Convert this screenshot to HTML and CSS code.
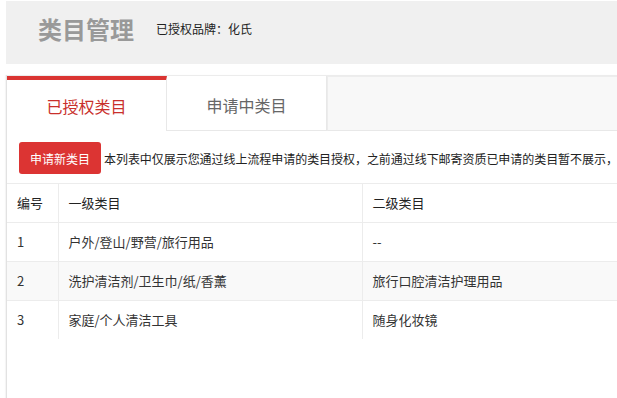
FILE: index.html
```html
<!DOCTYPE html>
<html lang="zh">
<head>
<meta charset="utf-8">
<link rel="stylesheet" href="styles.css">
</head>
<body>
<div class="page">
  <div class="page-header">
    <h1 class="title">类目管理</h1>
    <span class="brand">已授权品牌：化氏</span>
  </div>
  <div class="panel">
    <div class="tabs">
      <div class="tab active">已授权类目</div>
      <div class="tab">申请中类目</div>
      <div class="tab-rest"></div>
    </div>
    <div class="toolbar">
      <button class="btn-apply">申请新类目</button>
      <span class="notice">本列表中仅展示您通过线上流程申请的类目授权，之前通过线下邮寄资质已申请的类目暂不展示，</span>
    </div>
    <div class="table-wrap">
      <table class="cat-table">
        <colgroup>
          <col class="c-no">
          <col class="c-first">
          <col class="c-second">
        </colgroup>
        <thead>
          <tr><th>编号</th><th>一级类目</th><th>二级类目</th></tr>
        </thead>
        <tbody>
          <tr><td>1</td><td>户外/登山/野营/旅行用品</td><td>--</td></tr>
          <tr class="alt"><td>2</td><td>洗护清洁剂/卫生巾/纸/香薰</td><td>旅行口腔清洁护理用品</td></tr>
          <tr><td>3</td><td>家庭/个人清洁工具</td><td>随身化妆镜</td></tr>
        </tbody>
      </table>
    </div>
  </div>
</div>
</body>
</html>
```

FILE: styles.css
```css
html, body {
  margin: 0;
  padding: 0;
  background: #fff;
  overflow: hidden;
}
body {
  font-family: "Noto Sans CJK SC", "Noto Sans", sans-serif;
  font-size: 12px;
  color: #333;
  width: 617px;
  height: 398px;
}
.page {
  padding-left: 6px;
}
.page-header {
  margin-top: 1px;
  height: 63px;
  box-sizing: border-box;
  padding: 0 0 8px 32px;
  background: #f0f0f0;
  display: flex;
  align-items: center;
  gap: 22px;
}
.title {
  margin: 0;
  font-size: 24px;
  font-weight: bold;
  color: #999;
  line-height: 1;
}
.brand {
  font-size: 12px;
  color: #222;
}
.panel {
  margin-top: 11px;
  border-left: 1px solid #e2e2e2;
  box-shadow: -1px 0 1px rgba(0,0,0,0.04);
  height: 340px;
  overflow: hidden;
}
.tabs {
  display: flex;
  border-top: 1px solid #ececec;
  height: 55px;
}
.tab {
  width: 160px;
  box-sizing: border-box;
  display: flex;
  align-items: center;
  justify-content: center;
  font-size: 16px;
  color: #666;
  background: #fff;
  border-right: 1px solid #e8e8e8;
  border-bottom: 1px solid #e8e8e8;
  padding-top: 4px;
}
.tab.active {
  border-top: 4px solid #da3432;
  border-bottom: none;
  color: #c9302c;
  padding-top: 0;
}
.tab-rest {
  flex: 1;
  background: #f8f8f8;
  border-left: 1px solid #ececec;
  border-top: 1px solid #ededed;
  border-bottom: 1px solid #e8e8e8;
}
.toolbar {
  padding: 11px 0 9px 12px;
  display: flex;
  align-items: center;
  gap: 3px;
  white-space: nowrap;
  border-bottom: 1px solid #ececec;
}
.btn-apply {
  font-family: inherit;
  font-size: 12px;
  color: #fff;
  background: #dc3433;
  border: none;
  border-radius: 3px;
  height: 32px;
  width: 82px;
  padding: 0;
  flex: none;
}
.notice {
  color: #222;
  letter-spacing: -0.05px;
}
.table-wrap {
  overflow: hidden;
}
.cat-table {
  border-collapse: collapse;
  table-layout: fixed;
  width: 700px;
  font-size: 13px;
}
.c-no { width: 51px; }
.c-first { width: 304px; }
.c-second { width: 345px; }
.cat-table th,
.cat-table td {
  text-align: left;
  padding: 0 10px;
  border-right: 1px solid #ececec;
  border-bottom: 1px solid #ececec;
  height: 39px;
  box-sizing: border-box;
}
.cat-table th {
  font-weight: normal;
  color: #222;
  height: 38px;
}
.cat-table td {
  color: #333;
}
.cat-table tr.alt td {
  background: #f9f9f9;
}
.cat-table tbody tr:last-child td {
  border-bottom: none;
}
```
